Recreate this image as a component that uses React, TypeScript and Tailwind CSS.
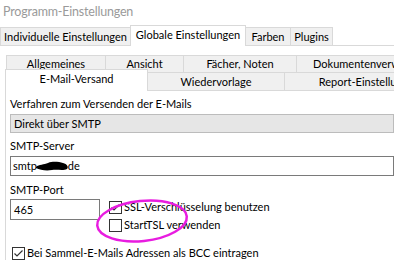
import React from 'react';

function CheckBox({ checked }: { checked: boolean }) {
    return (
        <span className="inline-flex w-[13px] h-[13px] shrink-0 border border-[#333333] bg-white items-center justify-center">
            {checked && (
                <svg width="11" height="11" viewBox="0 0 11 11">
                    <path d="M1.5 5.5 L4 8 L9.5 2.5" fill="none" stroke="#333333" strokeWidth="1.2" />
                </svg>
            )}
        </span>
    );
}

export default function App() {
    return (
        <div className="relative w-[394px] h-[260px] overflow-hidden bg-white text-black text-[11px] leading-[16px] font-['Lato',sans-serif]">
            {/* window title */}
            <div className="h-[25px] pl-[3px] pt-[3px] text-[12.5px] leading-[18px] tracking-[-0.2px] text-[#9a9a9a]">Programm-Einstellungen</div>

            {/* outer tabs */}
            <div className="flex items-end h-[21px] border-b border-[#d9d9d9] whitespace-nowrap">
                <div className="w-[130px] shrink-0 h-[18px] flex items-center justify-center bg-[#f0f0f0] border-t border-l border-[#d9d9d9]">
                    Individuelle Einstellungen
                </div>
                <div className="relative z-10 w-[116px] shrink-0 h-[21px] -mb-px flex items-center justify-center pb-[2px] bg-white border-t border-l border-r border-[#d9d9d9]">
                    Globale Einstellungen
                </div>
                <div className="w-[44px] shrink-0 h-[18px] flex items-center justify-center bg-[#f0f0f0] border-t border-[#d9d9d9]">
                    Farben
                </div>
                <div className="w-[43px] shrink-0 h-[18px] flex items-center justify-center bg-[#f0f0f0] border-t border-l border-r border-[#d9d9d9]">
                    Plugins
                </div>
            </div>

            {/* inner tab control */}
            <div className="ml-[5px] mt-[9px] whitespace-nowrap">
                <div className="flex h-[17px] pl-[1px]">
                    <div className="w-[99px] shrink-0 flex items-center justify-center bg-[#f0f0f0] border-t border-l border-[#d9d9d9]">Allgemeines</div>
                    <div className="w-[78px] shrink-0 flex items-center justify-center bg-[#f0f0f0] border-t border-l border-[#d9d9d9]">Ansicht</div>
                    <div className="w-[113px] shrink-0 flex items-center justify-center bg-[#f0f0f0] border-t border-l border-[#d9d9d9]">Fächer, Noten</div>
                    <div className="w-[150px] shrink-0 flex items-center justify-center bg-[#f0f0f0] border-t border-l border-[#d9d9d9]">Dokumentenverwaltung</div>
                </div>
                <div className="flex items-end h-[19px] border-t border-b border-[#d9d9d9]">
                    <div className="relative z-10 w-[143px] shrink-0 h-[22px] -mb-px flex items-start justify-center pt-[1px] bg-white border-t border-l border-r border-[#d9d9d9]">E-Mail-Versand</div>
                    <div className="w-[136px] shrink-0 h-[17px] flex items-center justify-center bg-[#f0f0f0]">Wiedervorlage</div>
                    <div className="w-[170px] shrink-0 h-[17px] flex items-center justify-center bg-[#f0f0f0] border-l border-[#d9d9d9]">Report-Einstellungen</div>
                </div>

                {/* page content */}
                <div className="flex flex-col border-l border-[#d9d9d9] pl-[4px] pt-[5px] h-[200px]">
                    <div>Verfahren zum Versenden der E-Mails</div>
                    <div className="mt-[2px] h-[19px] flex items-center pl-[3px] bg-[#e6e6e6] border border-[#bcbcbc]">Direkt über SMTP</div>

                    <div className="mt-[5px]">SMTP-Server</div>
                    <div className="mt-[2px] h-[20px] flex items-center pl-[2px] border border-[#7a7a7a]">
                        <span>smtp</span>
                        <svg width="34" height="12" viewBox="0 0 34 12" className="-ml-[2px] -mr-[1px]">
                            <path d="M1 7 C4 4 9 5 13 3 C18 1 24 2 28 3 C32 4 34 7 32 9 C28 11 22 9 17 10 C11 11 5 10 1 8 Z" fill="#000000" />
                        </svg>
                        <span>de</span>
                    </div>

                    <div className="mt-[6px]">SMTP-Port</div>
                    <div className="mt-[1px] flex items-start">
                        <div className="w-[90px] h-[21px] flex items-center pl-[3px] border border-[#7a7a7a]">465</div>
                        <div className="ml-[9px] flex flex-col gap-[2px]">
                            <div className="h-[16px] flex items-center gap-[2px]">
                                <CheckBox checked={true} />
                                <span>SSL-Verschlüsselung benutzen</span>
                            </div>
                            <div className="h-[16px] flex items-center gap-[2px]">
                                <CheckBox checked={false} />
                                <span>StartTSL verwenden</span>
                            </div>
                        </div>
                    </div>

                    <div className="mt-[12px] ml-[2px] h-[16px] flex items-center gap-[2px]">
                        <CheckBox checked={true} />
                        <span>Bei Sammel-E-Mails Adressen als BCC eintragen</span>
                    </div>
                </div>
            </div>

            {/* hand-drawn highlight */}
            <svg className="absolute left-0 top-0 pointer-events-none" width="394" height="260">
                <ellipse cx="142" cy="221" rx="45" ry="20" transform="rotate(-6 142 221)" fill="none" stroke="#e81ce0" strokeWidth="2.5" />
            </svg>
        </div>
    );
}
